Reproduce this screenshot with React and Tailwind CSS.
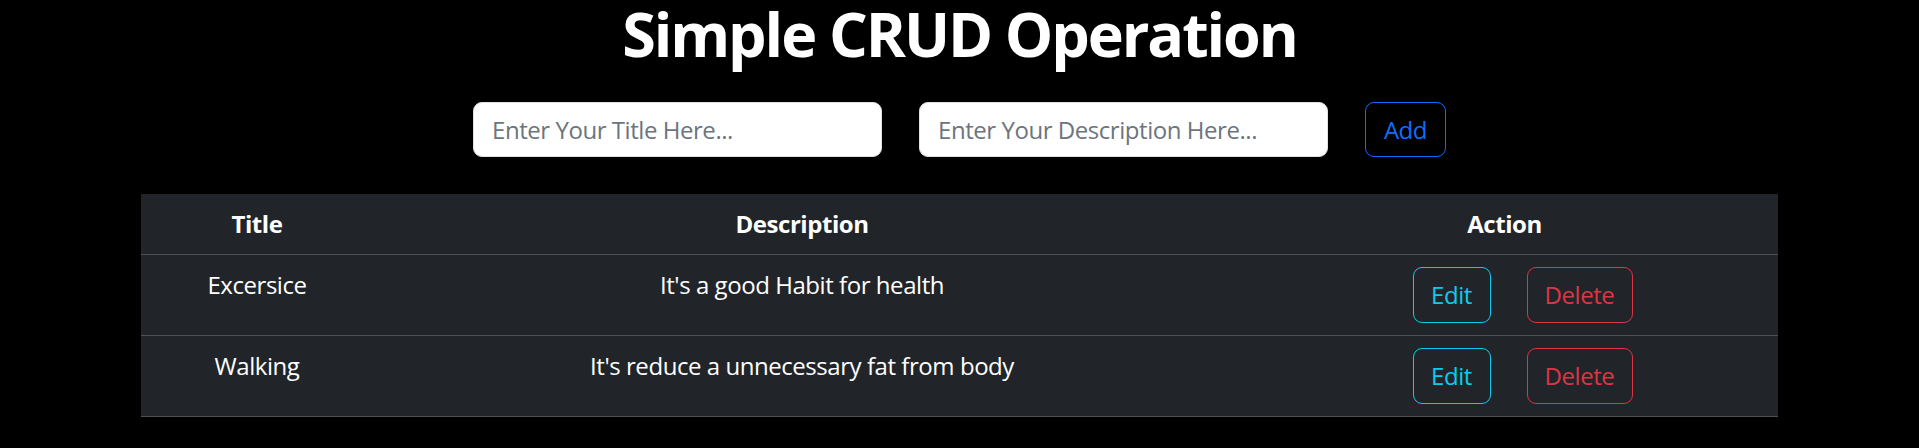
import React from "react";

const rows = [
  { title: "Excersice", description: "It's a good Habit for health" },
  { title: "Walking", description: "It's reduce a unnecessary fat from body" },
];

export default function App() {
  return (
    <div className="min-h-screen bg-black font-['Open_Sans','Noto_Sans',sans-serif] tracking-[-0.028em] text-white">
      <h1 className="mb-[34px] text-center text-[61px] font-bold leading-[68px] tracking-[-0.034em]">
        Simple CRUD Operation
      </h1>

      <div className="flex justify-center gap-[37px]">
        <input
          type="text"
          placeholder="Enter Your Title Here..."
          className="h-[55px] w-[409px] rounded-[9px] border border-[#dee2e6] bg-white px-[18px] text-[24px] text-[#212529] outline-none placeholder:text-[#6c757d]"
        />
        <input
          type="text"
          placeholder="Enter Your Description Here..."
          className="h-[55px] w-[409px] rounded-[9px] border border-[#dee2e6] bg-white px-[18px] text-[24px] text-[#212529] outline-none placeholder:text-[#6c757d]"
        />
        <button className="h-[55px] w-[81px] rounded-[9px] border border-[#0d6efd] text-[24px] text-[#0d6efd]">
          Add
        </button>
      </div>

      <table className="mx-auto mt-[37px] w-[1637px] table-fixed border-collapse bg-[#212529] text-center text-[24px] leading-[36px]">
        <colgroup>
          <col className="w-[232px]" />
          <col className="w-[858px]" />
          <col className="w-[547px]" />
        </colgroup>
        <thead>
          <tr className="border-b border-[#4d5154]">
            <th className="p-[12px] font-bold">Title</th>
            <th className="p-[12px] font-bold">Description</th>
            <th className="p-[12px] font-bold">Action</th>
          </tr>
        </thead>
        <tbody>
          {rows.map((r) => (
            <tr key={r.title} className="border-b border-[#4d5154]">
              <td className="p-[12px] align-top">{r.title}</td>
              <td className="p-[12px] align-top">{r.description}</td>
              <td className="p-[12px] align-top">
                <button className="ml-[36px] h-[56px] w-[78px] rounded-[9px] border border-[#0dcaf0] text-[#0dcaf0]">
                  Edit
                </button>
                <button className="ml-[36px] h-[56px] w-[106px] rounded-[9px] border border-[#dc3545] text-[#dc3545]">
                  Delete
                </button>
              </td>
            </tr>
          ))}
        </tbody>
      </table>
    </div>
  );
}
